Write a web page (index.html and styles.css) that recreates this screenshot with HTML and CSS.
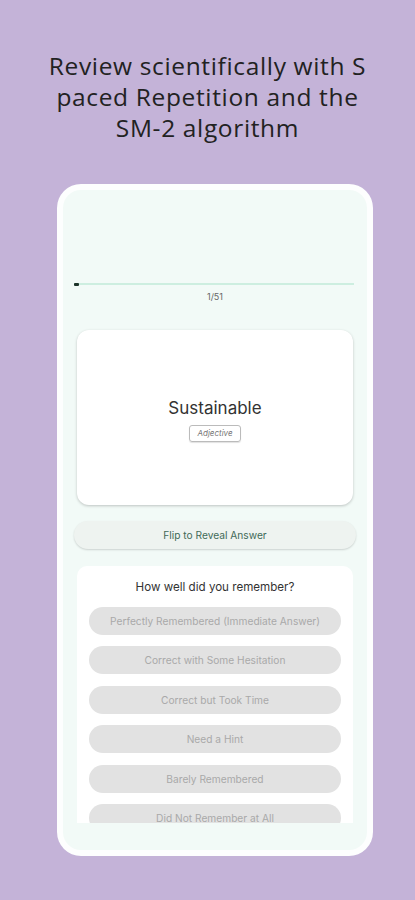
FILE: index.html
```html
<!DOCTYPE html>
<html>
<head>
<meta charset="utf-8">
<link rel="stylesheet" href="styles.css">
</head>
<body>
<div class="page">
  <h1 class="headline">Review scientifically with S<br>paced Repetition and the<br>SM-2 algorithm</h1>
  <div class="phone">
    <div class="screen">
      <div class="progress"><div class="progress-fill"></div></div>
      <div class="count">1/51</div>
      <div class="card">
        <div class="word">Sustainable</div>
        <div class="pos">Adjective</div>
      </div>
      <div class="flip">Flip to Reveal Answer</div>
      <div class="panel">
        <div class="panel-title">How well did you remember?</div>
        <div class="options">
          <div class="option">Perfectly Remembered (Immediate Answer)</div>
          <div class="option">Correct with Some Hesitation</div>
          <div class="option">Correct but Took Time</div>
          <div class="option">Need a Hint</div>
          <div class="option">Barely Remembered</div>
          <div class="option">Did Not Remember at All</div>
        </div>
      </div>
    </div>
  </div>
</div>
</body>
</html>
```
FILE: styles.css
```css
html, body {
  margin: 0;
  padding: 0;
}
body {
  background: #c4b3d8;
  width: 415px;
  height: 900px;
  overflow: hidden;
}
.page {
  display: flex;
  flex-direction: column;
  align-items: center;
}
.headline {
  margin: 50px 0 0;
  font-family: "Open Sans", "Noto Sans", sans-serif;
  font-weight: 400;
  font-size: 24.5px;
  line-height: 31px;
  color: #222;
  text-align: center;
  letter-spacing: 0.65px;
}
.phone {
  margin-top: 41px;
  margin-left: 15px;
  width: 316px;
  height: 672px;
  box-sizing: border-box;
  background: #fdfefe;
  border-radius: 24px;
  padding: 6px;
}
.screen {
  height: 100%;
  box-sizing: border-box;
  background: #f2faf7;
  border-radius: 18px;
  padding-top: 93px;
  display: flex;
  flex-direction: column;
  align-items: center;
  font-family: Inter, Roboto, "Liberation Sans", sans-serif;
}
.progress {
  align-self: stretch;
  margin: 0 13px 0 11px;
  height: 2px;
  background: #cdeee0;
}
.progress-fill {
  width: 5px;
  height: 3px;
  margin-top: -0.5px;
  background: #1d3329;
  border-radius: 1px;
}
.count {
  margin-top: 6px;
  font-size: 9px;
  line-height: 12px;
  color: #666;
}
.card {
  margin-top: 27px;
  width: 276px;
  height: 175px;
  background: #fff;
  border-radius: 12px;
  box-shadow: 0 1px 3px rgba(0,0,0,0.22);
  display: flex;
  flex-direction: column;
  align-items: center;
  justify-content: center;
}
.word {
  font-size: 17px;
  line-height: 20px;
  color: #333;
  margin-top: 4px;
}
.pos {
  margin-top: 7px;
  border: 1px solid #bbb;
  border-radius: 3px;
  box-shadow: 0 1px 1px rgba(0,0,0,0.12);
  font-size: 8px;
  line-height: 15px;
  padding: 0 7px;
  color: #777;
  font-style: italic;
}
.flip {
  margin-top: 16px;
  width: 282px;
  height: 28px;
  border-radius: 14px;
  background: #eef3f0;
  box-shadow: 0 1px 2px rgba(0,0,0,0.16);
  display: flex;
  align-items: center;
  justify-content: center;
  font-size: 10.2px;
  color: #3f6a58;
}
.panel {
  margin-top: 17px;
  width: 276px;
  height: 257px;
  background: #fff;
  border-radius: 10px 10px 0 0;
  overflow: hidden;
  display: flex;
  flex-direction: column;
  align-items: center;
  padding-top: 14px;
  box-sizing: border-box;
}
.panel-title {
  font-size: 11.6px;
  line-height: 14px;
  color: #333;
}
.options {
  margin-top: 13px;
  display: flex;
  flex-direction: column;
  gap: 11.4px;
}
.option {
  width: 252px;
  height: 28px;
  border-radius: 14px;
  background: #e2e2e2;
  display: flex;
  align-items: center;
  justify-content: center;
  font-size: 10.2px;
  color: #a9a9a9;
  flex-shrink: 0;
}
```
